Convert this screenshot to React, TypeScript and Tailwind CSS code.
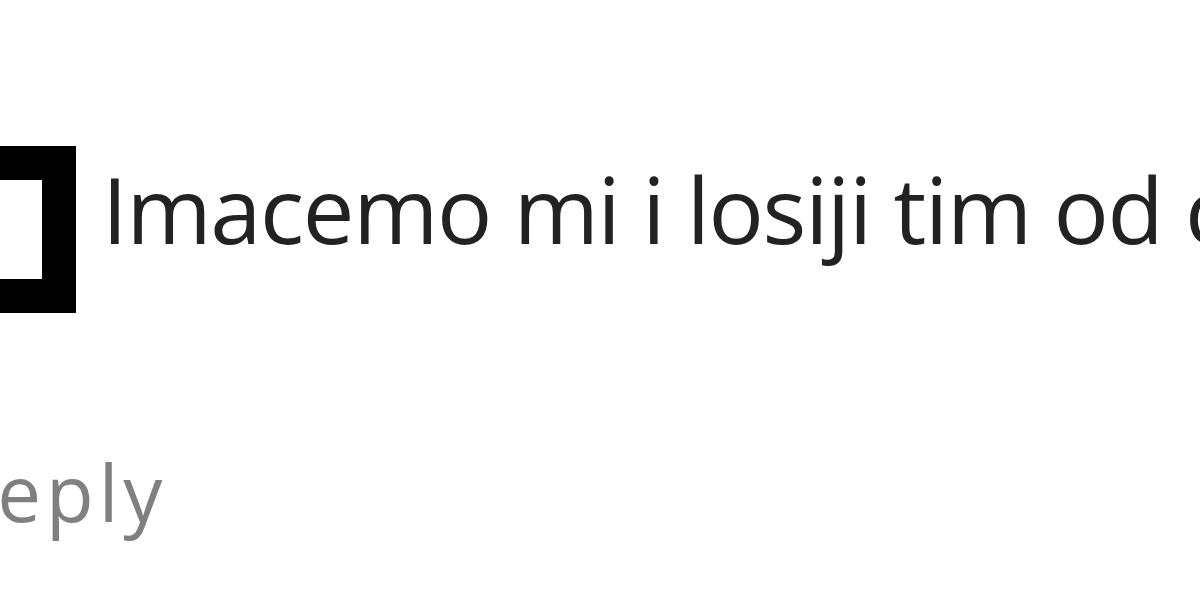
export default function App() {
  return (
    <div className="w-[1200px] h-[600px] bg-white overflow-hidden" style={{ fontFamily: '"Open Sans", "Noto Sans", sans-serif' }}>
      <div className="pt-[146px] flex items-start">
        <div className="shrink-0 w-[167px] h-[167px] ml-[-91px] border-[34px] border-black" />
        <div className="ml-[26px] mt-[17px] whitespace-nowrap text-[92px] leading-none tracking-[-1.3px] text-[#222]">
          Imacemo mi i losiji tim od cega
        </div>
      </div>
      <div className="mt-[140px] ml-[-56px] whitespace-nowrap text-[78px] leading-none tracking-[5px] text-[#808080]">
        Reply
      </div>
    </div>
  );
}
